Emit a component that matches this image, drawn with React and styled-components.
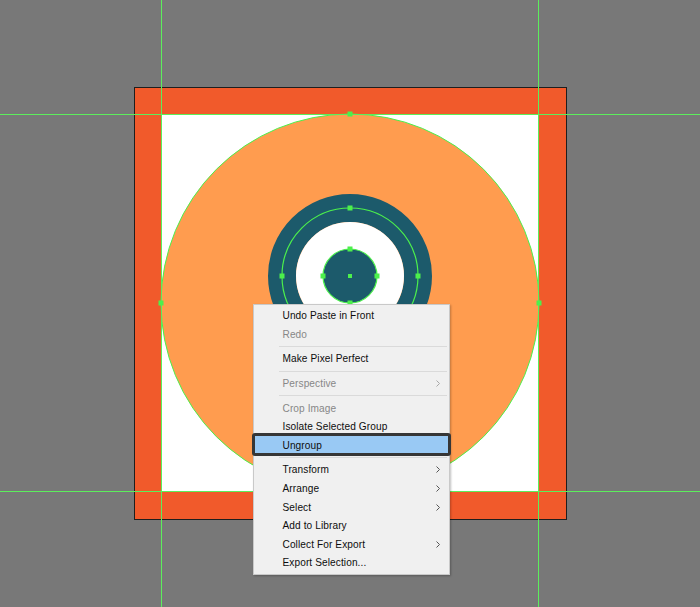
import React from 'react'
import styled, { createGlobalStyle } from 'styled-components'

const GlobalStyle = createGlobalStyle`
  html, body {
    margin: 0;
    padding: 0;
    background: #787878;
  }
`

const Stage = styled.div`
  position: relative;
  width: 700px;
  height: 607px;
  overflow: hidden;
  background: #787878;
`

const Artboard = styled.svg`
  position: absolute;
  left: 0;
  top: 0;
  display: block;
`

const Menu = styled.div`
  position: absolute;
  left: 253px;
  top: 304px;
  width: 195px;
  box-sizing: content-box;
  padding: 1.4px 0;
  background: #f0f0f0;
  border: 1px solid #c9c9c9;
  box-shadow: 1px 1px 2px rgba(0, 0, 0, 0.25);
  font-family: "Liberation Sans", Arial, sans-serif;
  font-size: 10.1px;
`

const Item = styled.div`
  position: relative;
  display: flex;
  align-items: center;
  justify-content: space-between;
  height: 18.6px;
  padding: 0 9px 0 28.5px;
  color: ${p => (p.$disabled ? '#878787' : '#0d0d0d')};
  white-space: nowrap;

  ${p =>
    p.$active &&
    `
    &::before {
      content: '';
      position: absolute;
      left: -2px;
      right: -2px;
      top: -3px;
      bottom: -1px;
      background: #99c9f4;
      border: 3px solid #363636;
      border-radius: 3px;
    }
  `}
`

const Label = styled.span`
  position: relative;
  letter-spacing: 0.1px;
`

const Chevron = styled.svg`
  position: relative;
  width: 4px;
  height: 7px;
  stroke: ${p => (p.$disabled ? '#a8a8a8' : '#555')};
`

const Separator = styled.div`
  height: 6px;
  display: flex;
  align-items: center;
  padding: 0 2px 0 25px;

  &::after {
    content: '';
    flex: 1;
    height: 1px;
    background: #dadada;
  }
`

const entries = [
  { label: 'Undo Paste in Front' },
  { label: 'Redo', disabled: true },
  { sep: true },
  { label: 'Make Pixel Perfect' },
  { sep: true },
  { label: 'Perspective', disabled: true, sub: true },
  { sep: true },
  { label: 'Crop Image', disabled: true },
  { label: 'Isolate Selected Group' },
  { label: 'Ungroup', active: true },
  { sep: true },
  { label: 'Transform', sub: true },
  { label: 'Arrange', sub: true },
  { label: 'Select', sub: true },
  { label: 'Add to Library' },
  { label: 'Collect For Export', sub: true },
  { label: 'Export Selection...' },
]

const GREEN = '#4cf04c'

const Anchor = ({ x, y }) => (
  <rect x={x - 2.5} y={y - 2.5} width="5" height="5" fill={GREEN} />
)

// the illustration on the canvas, guides and selection marks included
const Artwork = () => (
  <Artboard width="700" height="607" viewBox="0 0 700 607">
    <rect x="134" y="87" width="433" height="433" fill="#1e1e1e" />
    <rect x="135" y="88" width="431" height="431" fill="#f15a2b" />
    <rect x="161" y="114" width="378" height="378" fill="#ffffff" />
    <circle cx="350" cy="303" r="189" fill="#ff9c4f" />
    <circle cx="350" cy="303" r="189" fill="none" stroke={GREEN} strokeWidth="1" />

    <circle cx="350" cy="276" r="68" fill="none" stroke="#1c5a6b" strokeWidth="28" />
    <circle cx="350" cy="276" r="54" fill="#ffffff" />
    <circle cx="350" cy="276" r="68" fill="none" stroke={GREEN} strokeWidth="1.2" />
    <circle cx="350" cy="276" r="27" fill="#1c5a6b" stroke={GREEN} strokeWidth="1.2" />

    <g stroke="#5cee5c" strokeWidth="1">
      <line x1="161.5" y1="0" x2="161.5" y2="607" />
      <line x1="538.5" y1="0" x2="538.5" y2="607" />
      <line x1="0" y1="114.5" x2="700" y2="114.5" />
      <line x1="0" y1="491.5" x2="700" y2="491.5" />
    </g>

    <Anchor x={350} y={114} />
    <Anchor x={161} y={303} />
    <Anchor x={539} y={303} />
    <Anchor x={350} y={208} />
    <Anchor x={282} y={276} />
    <Anchor x={418} y={276} />
    <Anchor x={350} y={249} />
    <Anchor x={323} y={276} />
    <Anchor x={377} y={276} />
    <Anchor x={350} y={303} />
    <rect x="348" y="274" width="4" height="4" fill={GREEN} />
  </Artboard>
)

export default function App() {
  return (
    <Stage>
      <GlobalStyle />
      <Artwork />
      <Menu>
        {entries.map((e, i) =>
          e.sep ? (
            <Separator key={i} />
          ) : (
            <Item key={i} $disabled={e.disabled} $active={e.active}>
              <Label>{e.label}</Label>
              {e.sub && (
                <Chevron viewBox="0 0 4 7" $disabled={e.disabled} fill="none" strokeWidth="1">
                  <polyline points="0.5,0.5 3.5,3.5 0.5,6.5" />
                </Chevron>
              )}
            </Item>
          )
        )}
      </Menu>
    </Stage>
  )
}
